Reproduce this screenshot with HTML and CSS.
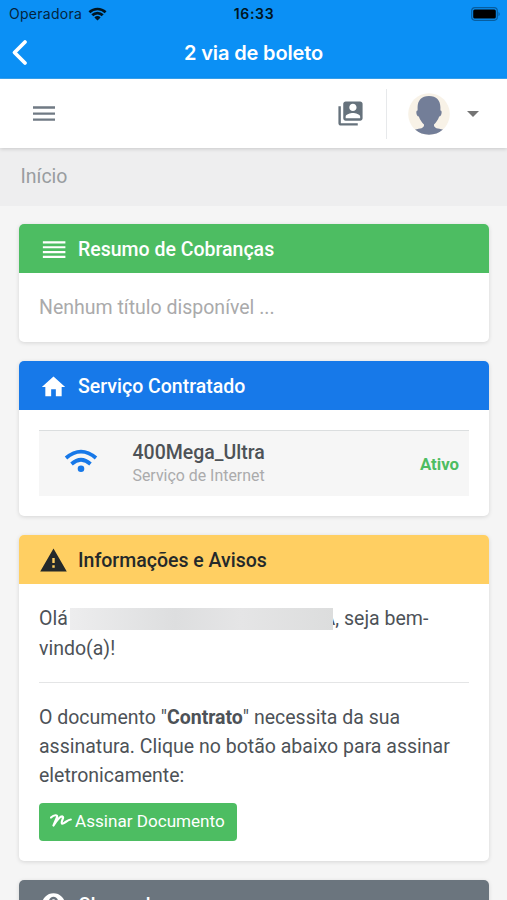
FILE: index.html
```html
<!DOCTYPE html>
<html lang="pt-BR">
<head>
<meta charset="utf-8">
<title>2 via de boleto</title>
<link rel="stylesheet" href="styles.css">
</head>
<body>
<header class="app-header">
  <div class="status">
    <div class="carrier"><span>Operadora</span>
      <svg width="19" height="14" viewBox="0 0 19 14"><path d="M0.500 4.300A13 13 0 0 1 18.500 4.300L16.700 6.200A10.300 10.300 0 0 0 2.300 6.200ZM3.300 7.300A8.800 8.800 0 0 1 15.700 7.300L13.700 9.300A6 6 0 0 0 5.300 9.300ZM6.400 10.400A4.400 4.400 0 0 1 12.600 10.400L9.500 13.500Z"/></svg>
    </div>
    <div class="clock">16:33</div>
    <div class="battery">
      <svg width="31" height="14" viewBox="0 0 31 14"><rect x=".7" y=".7" width="25.600" height="12.600" rx="3.200" fill="none" stroke="#075d9f" stroke-width="1.200"/><rect x="2.200" y="2.500" width="22.600" height="9" rx="1.500"/><path d="M27.500 4.700Q30 7 27.500 9.300Z" fill="#075d9f"/></svg>
    </div>
  </div>
  <div class="titlebar">
    <svg class="back" width="20" height="28" viewBox="0 0 20 28"><path d="M16 3L5.500 13.500L16 24"/></svg>
    <h1>2 via de boleto</h1>
  </div>
</header>
<nav class="toolbar">
  <svg class="menu" width="24" height="18" viewBox="0 0 24 18"><path d="M1 2.500H23M1 8.600H23M1 14.700H23"/></svg>
  <div class="account">
    <svg class="contacts" width="29" height="29" viewBox="0 0 24 24"><path d="M4 6H2v14c0 1.100.9 2 2 2h14v-2H4V6zM20 2H8c-1.100 0-2 .9-2 2v12c0 1.100.9 2 2 2h12c1.100 0 2-.9 2-2V4c0-1.100-.9-2-2-2zm-6 2c1.660 0 3 1.340 3 3s-1.340 3-3 3-3-1.340-3-3 1.340-3 3-3zm6 12H8v-1.500c0-1.990 4-3 6-3s6 1.010 6 3V16z"/></svg>
    <svg class="avatar" width="42" height="42" viewBox="0 0 42 42"><circle cx="21" cy="21" r="20.800" fill="#f8f2e7"/><path d="M21 3C13.500 3 9.700 7.500 9.600 14V17.500C7.600 17 8 23 10.800 23.500C12 27 14 29.500 16 31.500C16.500 35.500 12 35.500 7 36.500Q13 41.700 21 41.700Q29 41.700 35 36.500C30 35.500 25.500 35.500 26 31.500C28 29.500 30 27 31.200 23.500C34 23 34.400 17 32.400 17.500V14C32.300 7.500 28.500 3 21 3Z" fill="#737e98"/></svg>
    <svg class="caret" width="12" height="6" viewBox="0 0 12 6"><path d="M0 0H12L6 6Z"/></svg>
  </div>
</nav>
<div class="breadcrumb">Início</div>
<main>
  <section class="card">
    <h2 class="green"><svg width="30" height="30" viewBox="0 0 30 30"><path d="M4 6H27.300V8.300H4ZM4 11H27.300V13.300H4ZM4 16H27.300V18.300H4ZM4 21H27.300V23.300H4Z"/></svg>Resumo de Cobranças</h2>
    <div class="body empty">Nenhum título disponível ...</div>
  </section>
  <section class="card">
    <h2 class="blue"><svg width="28" height="28" viewBox="0 0 24 24"><path d="M10 20v-6h4v6h5v-8h3L12 3 2 12h3v8z"/></svg>Serviço Contratado</h2>
    <div class="body">
      <div class="service">
        <svg width="34" height="28" viewBox="0 0 34 28"><g fill="none" stroke="#1778e8" stroke-width="3.700"><path d="M2 11Q17 -1.800 32 11"/><path d="M7.500 17Q17 8.500 26.500 17"/></g><circle cx="17" cy="21.800" r="3.300" fill="#1778e8"/></svg>
        <div class="plan"><strong>400Mega_Ultra</strong><span>Serviço de Internet</span></div>
        <b class="active">Ativo</b>
      </div>
    </div>
  </section>
  <section class="card">
    <h2 class="yellow"><svg width="29" height="29" viewBox="0 0 24 24"><path d="M1 21h22L12 2 1 21zm12-3h-2v-2h2v2zm0-4h-2v-4h2v4z"/></svg>Informações e Avisos</h2>
    <div class="body notices">
      <p>Olá <span class="redacted"></span><span class="initial">A</span>, seja bem-<br>vindo(a)!</p>
      <hr>
      <p>O documento "<b>Contrato</b>" necessita da sua<br>assinatura. Clique no botão abaixo para assinar<br>eletronicamente:</p>
      <button><svg width="22" height="14" viewBox="0 0 22 14"><path d="M1 3.500C4 .8 8 .3 7 3.300L3.500 11.500C7 6 10.500 2 12.500 2.500C14.500 3 10.500 8.500 12 9.500C13.500 10.500 17.500 5.500 20.800 5.500"/></svg>Assinar Documento</button>
    </div>
  </section>
  <section class="card">
    <h2 class="gray"><svg width="28" height="28" viewBox="0 0 24 24"><path d="M12 2a10 10 0 1 0 0 20a10 10 0 0 0 0-20zm1 17h-2v-2h2v2zm2.070-7.750l-.9.920C13.450 12.900 13 13.500 13 15h-2v-.5c0-1.100.45-2.100 1.170-2.830l1.240-1.260c.37-.36.59-.86.59-1.410 0-1.100-.9-2-2-2s-2 .9-2 2H8c0-2.210 1.790-4 4-4s4 1.790 4 4c0 .88-.36 1.680-.93 2.250z"/></svg>Chamados</h2>
  </section>
</main>
</body>
</html>
```
FILE: styles.css
```css
* { box-sizing: border-box; }
html, body { height: 900px; overflow: hidden; }
body { margin: 0; background: #f5f5f5; color: #4d5257; font-family: Roboto, sans-serif; }
svg { display: block; flex: none; }
.app-header { height: 79px; background: #0b90f5; border-bottom: 1px solid #39a5f3; }
.status { height: 27px; padding: 0 7px 0 9px; display: grid; grid-template-columns: 1fr auto 1fr; align-items: center; color: #04243d; font: 14px Inter, sans-serif; }
.carrier { display: flex; align-items: center; gap: 6px; letter-spacing: .28px; }
.carrier span { width: 73px; }
.carrier svg { fill: #001522; }
.clock { color: #001522; font-weight: 600; letter-spacing: .65px; padding-right: 1px; }
.battery { justify-self: end; margin-right: -2px; }
.titlebar { height: 51px; display: grid; grid-template-columns: 40px 1fr 40px; align-items: center; }
.back { margin-left: 9px; fill: none; stroke: #fff; stroke-width: 3.800; stroke-linecap: round; stroke-linejoin: round; }
h1 { margin: 0; color: #fff; text-align: center; font: 600 20px Inter, sans-serif; letter-spacing: -.15px; }
.toolbar { height: 69px; background: #fff; display: flex; justify-content: space-between; align-items: center; padding: 0 28px 0 32px; box-shadow: 0 1px 4px rgba(0,0,0,.16); position: relative; }
.menu { stroke: #707a84; stroke-width: 2.300; }
.account { display: flex; align-items: center; }
.contacts { fill: #66727c; margin: -1px 21px 0 0; }
.avatar { width: 64px; height: 50px; padding: 4px 0 4px 21px; border-left: 1px solid #e7e9eb; }
.caret { fill: #747474; margin-left: 17px; }
.breadcrumb { height: 58px; padding: 0 20.500px; background: #eeeeef; color: #999da0; font-size: 19.500px; line-height: 57px; }
main { padding: 18.300px 18px 0 19px; display: flex; flex-direction: column; gap: 19px; }
.card { background: #fff; border-radius: 5px; box-shadow: 0 1px 4px rgba(0,0,0,.13); overflow: hidden; flex: none; }
h2 { margin: 0; height: 49px; padding: 2px 0 0 20px; display: flex; align-items: center; color: #fff; font-size: 19.500px; font-weight: 500; }
h2 svg { width: 29px; margin-right: 10px; fill: currentColor; }
.green { background: #4dbd62; }
.blue { background: #1779e9; }
.yellow { background: #ffcf62; color: #24292a; }
.gray { background: #6b757e; }
.body { padding: 20px; }
.empty { height: 69px; padding: 0 20px; line-height: 69px; color: #aaaaab; font-size: 19.500px; }
.service { height: 66px; padding: 0 10px 0 25px; border-top: 1px solid #dbdedf; background: #f6f6f6; display: flex; align-items: center; }
.service svg { margin-top: -5px; }
.plan { display: flex; flex-direction: column; margin-left: 34.500px; }
.plan strong { font-size: 19.500px; line-height: 24px; font-weight: 500; }
.plan span { font-size: 15.900px; line-height: 22px; color: #ababac; }
.active { margin-left: auto; color: #4dbd62; font-size: 16.800px; }
.notices { height: 276.500px; }
p { margin: 0; font-size: 19.500px; line-height: 29.400px; white-space: nowrap; }
.redacted { display: inline-block; position: relative; width: 263px; height: 22px; vertical-align: -5px; margin-left: -3px; background: linear-gradient(90deg,#ededee,#dddedf 40%,#e5e5e6 65%,#dcdddd); }
.initial { margin-left: -10px; }
hr { border: 0; height: 1px; background: #e4e5e6; margin: 19px 0 19.500px; }
button { display: flex; align-items: center; gap: 3px; width: 198px; height: 38px; margin-top: 12px; padding: 0 0 1px 11px; border: 0; border-radius: 4px; background: #4dbd62; color: #fff; font: 17.100px Roboto, sans-serif; white-space: nowrap; }
button svg { fill: none; stroke: #fff; stroke-width: 2.200; stroke-linecap: round; stroke-linejoin: round; }
```
